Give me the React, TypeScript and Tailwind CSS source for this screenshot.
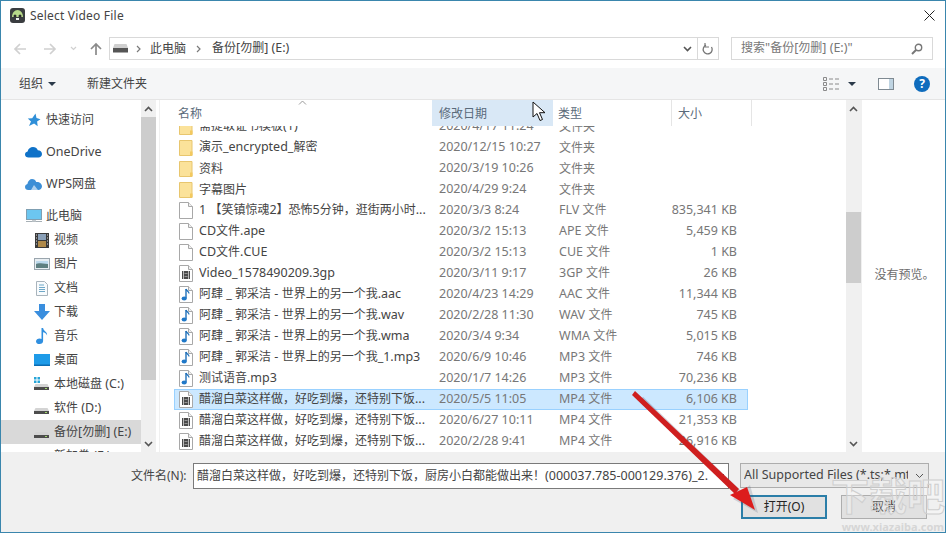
import React from "react";

/* ASCII runs are set a little larger than CJK runs, as in the reference's font pairing */
const T = ({ children }: { children: string }) => (
  <>
    {children.split(/([\x00-\x7f]+)/).map((part, i) =>
      /[\x00-\x7f]/.test(part) ? (
        <span key={i} className="text-[12.5px]">{part}</span>
      ) : (
        <span key={i}>{part}</span>
      )
    )}
  </>
);

const Folder = () => (
  <svg width="14" height="17" viewBox="0 0 14 17" className="shrink-0">
    <path d="M0.5 1.5h12.5v15H0.5z" fill="#fbe29a" stroke="#e8c66e" />
    <path d="M11 12.5h2.5v4H11z" fill="#f3c95f" />
  </svg>
);
const Sheet = ({ children }: { children?: React.ReactNode }) => (
  <svg width="14" height="17" viewBox="0 0 14 17" className="shrink-0">
    <path d="M0.5 0.5h9l4 4v12h-13z" fill="#fff" stroke="#a8a8a8" />
    <path d="M9.5 0.5v4h4" fill="#f0f0f0" stroke="#a8a8a8" />
    {children}
  </svg>
);
const Blank = () => <Sheet />;
const Video = () => (
  <Sheet>
    <path d="M3 6h8v8H3z" fill="#4a4a4a" />
    <path d="M4.5 6v8M9.5 6v8" stroke="#d8d8d8" strokeWidth="0.8" />
    <path d="M5.5 8.5h3M5.5 11.5h3" stroke="#aaa" strokeWidth="0.8" />
  </Sheet>
);
const Audio = () => (
  <Sheet>
    <path d="M7 3v9" stroke="#1f6fb8" strokeWidth="1.4" />
    <ellipse cx="5.2" cy="12.4" rx="2.6" ry="2" fill="#1f78c8" />
    <path d="M7 3c0.5 2 3 2.4 3 4.6" fill="none" stroke="#1f6fb8" strokeWidth="1.2" />
  </Sheet>
);

const files: [string, React.ReactNode, string, string, string][] = [
  ["需提取证书模板(1)", <Folder />, "2020/4/17 11:24", "文件夹", ""],
  ["演示_encrypted_解密", <Folder />, "2020/12/15 10:27", "文件夹", ""],
  ["资料", <Folder />, "2020/3/19 10:26", "文件夹", ""],
  ["字幕图片", <Folder />, "2020/4/29 9:24", "文件夹", ""],
  ["1 【笑镇惊魂2】恐怖5分钟，逛街两小时...", <Blank />, "2020/3/3 8:24", "FLV 文件", "835,341 KB"],
  ["CD文件.ape", <Blank />, "2020/3/2 15:13", "APE 文件", "5,459 KB"],
  ["CD文件.CUE", <Blank />, "2020/3/2 15:13", "CUE 文件", "1 KB"],
  ["Video_1578490209.3gp", <Video />, "2020/3/11 9:17", "3GP 文件", "26 KB"],
  ["阿肆 _ 郭采洁 - 世界上的另一个我.aac", <Audio />, "2020/4/23 14:29", "AAC 文件", "11,344 KB"],
  ["阿肆 _ 郭采洁 - 世界上的另一个我.wav", <Audio />, "2020/2/28 11:30", "WAV 文件", "745 KB"],
  ["阿肆 _ 郭采洁 - 世界上的另一个我.wma", <Audio />, "2020/3/4 9:34", "WMA 文件", "5,015 KB"],
  ["阿肆 _ 郭采洁 - 世界上的另一个我_1.mp3", <Audio />, "2020/6/9 10:46", "MP3 文件", "746 KB"],
  ["测试语音.mp3", <Audio />, "2020/1/7 14:26", "MP3 文件", "70,236 KB"],
  ["醋溜白菜这样做，好吃到爆，还特别下饭...", <Video />, "2020/5/5 11:05", "MP4 文件", "6,106 KB"],
  ["醋溜白菜这样做，好吃到爆，还特别下饭...", <Video />, "2020/6/27 10:11", "MP4 文件", "21,353 KB"],
  ["醋溜白菜这样做，好吃到爆，还特别下饭...", <Video />, "2020/2/28 9:41", "MP4 文件", "26,916 KB"],
];

const Disk = ({ win }: { win?: boolean }) => (
  <svg width="15" height="16" viewBox="0 0 15 16">
    {win && <path d="M0 1h2.5v2.5H0zM3.5 1H6v2.5H3.5zM0 4.5h2.5V7H0zM3.5 4.5H6V7H3.5z" fill="#27a5d8" />}
    <path d="M1.5 8h12l1.5 3H0z" fill="#d4d4d4" />
    <rect x="0" y="11" width="15" height="3" fill="#4d4d4d" />
    <rect x="11" y="12" width="2" height="1" fill="#9fd86a" />
  </svg>
);

const side: { label: string; icon: React.ReactNode; child?: boolean; gap?: boolean; sel?: boolean }[] = [
  {
    label: "快速访问",
    icon: (
      <svg width="14" height="14" viewBox="0 0 14 14">
        <path d="M8.5 0.5 9.5 5l4 1.2-3.4 2.3.6 4.8-3.6-2.8L2 13l2-4.4L0.8 5.6l4.4-.3z" fill="#2f8fd8" />
      </svg>
    ),
  },
  {
    label: "OneDrive",
    gap: true,
    icon: (
      <svg width="17" height="12" viewBox="0 0 17 12">
        <path d="M3.5 11.5C1.5 11.5 0 10.2 0 8.5 0 7 1 5.8 2.6 5.5 3.2 2.6 5.5 1 8 1c2.2 0 4 1.2 4.8 3.2 2.4 0 4.2 1.7 4.2 3.8 0 2-1.6 3.5-3.6 3.5z" fill="#0f72c8" />
      </svg>
    ),
  },
  {
    label: "WPS网盘",
    gap: true,
    icon: (
      <svg width="17" height="13" viewBox="0 0 17 13">
        <path d="M3.2 12C1.4 12 0 10.7 0 9c0-1.5 1-2.6 2.4-3C2.8 3 5 1 7 1c2.1 0 3.6 1.3 4.2 3 3-.5 5.8 1.7 5.8 4.2 0 2.2-1.7 3.8-3.8 3.8z" fill="#3d8fd6" />
        <path d="M6 12l3-5 4 5z" fill="#fff" opacity="0.6" />
      </svg>
    ),
  },
  {
    label: "此电脑",
    gap: true,
    icon: (
      <svg width="16" height="15" viewBox="0 0 16 15">
        <rect x="0.5" y="0.5" width="15" height="10" fill="#6cc6f0" stroke="#7f9fb2" />
        <path d="M0 12h16v1H0z" fill="#a7b0b6" />
        <path d="M6 11h4v1.5H6z" fill="#c6ccd0" />
      </svg>
    ),
  },
  {
    label: "视频",
    child: true,
    icon: (
      <svg width="14" height="15" viewBox="0 0 14 15">
        <rect width="14" height="15" fill="#3a3a3a" />
        <rect x="3" y="1" width="8" height="6" fill="#8aa0b8" />
        <rect x="3" y="8" width="8" height="6" fill="#b08a4a" />
        <path d="M1 2h1M1 5h1M1 8h1M1 11h1M12 2h1M12 5h1M12 8h1M12 11h1" stroke="#ddd" />
      </svg>
    ),
  },
  {
    label: "图片",
    child: true,
    icon: (
      <svg width="16" height="12" viewBox="0 0 16 12">
        <rect x="0.5" y="0.5" width="15" height="11" fill="#e8eef2" stroke="#9aa5ad" />
        <path d="M2 3h12v3H2z" fill="#bcd9ec" />
        <path d="M2 6c3-1.5 6 0 12 0v4H2z" fill="#5e7f80" />
      </svg>
    ),
  },
  {
    label: "文档",
    child: true,
    icon: (
      <svg width="12" height="15" viewBox="0 0 12 15">
        <path d="M0.5 0.5h8l3 3v11h-11z" fill="#f8fbfd" stroke="#a9b4bc" />
        <path d="M3 4h5M3 6.5h6M3 8.5h6M3 10.5h6" stroke="#6fa8c8" />
      </svg>
    ),
  },
  {
    label: "下载",
    child: true,
    icon: (
      <svg width="16" height="16" viewBox="0 0 16 16">
        <path d="M5 0h6v7h5l-8 9-8-9h5z" fill="#3a8ede" />
      </svg>
    ),
  },
  {
    label: "音乐",
    child: true,
    icon: (
      <svg width="12" height="16" viewBox="0 0 12 16">
        <path d="M5.5 0h1.6c.3 3 4.4 3.6 4 7.5-.6-2-2.5-3-4-3.3V13c0 1.7-1.5 3-3.5 3S0 15 0 13.4s1.7-2.9 3.6-2.9c.7 0 1.4.2 1.9.5z" fill="#2f8fe0" />
      </svg>
    ),
  },
  {
    label: "桌面",
    child: true,
    icon: (
      <svg width="16" height="12" viewBox="0 0 16 12">
        <rect width="16" height="12" fill="#1e9be8" />
        <rect y="10.5" width="16" height="1.5" fill="#0b6cb2" />
      </svg>
    ),
  },
  { label: "本地磁盘 (C:)", child: true, icon: <Disk win /> },
  { label: "软件 (D:)", child: true, icon: <Disk /> },
  { label: "备份[勿删] (E:)", child: true, sel: true, icon: <Disk /> },
  { label: "新加卷 (F:)", child: true, icon: <Disk /> },
];

const Chev = ({ up, className }: { up?: boolean; className?: string }) => (
  <svg width="9" height="6" viewBox="0 0 9 6" className={className}>
    <path d={up ? "M1 5l3.5-3.5L8 5" : "M1 1l3.5 3.5L8 1"} fill="none" stroke="#555" strokeWidth="1.6" />
  </svg>
);
const Crumb = () => (
  <svg width="6" height="8" viewBox="0 0 6 8" className="shrink-0">
    <path d="M1 1l3 3-3 3" fill="none" stroke="#7a7a7a" strokeWidth="1.2" />
  </svg>
);
const Arrow = ({ dir, color }: { dir: "l" | "r" | "u"; color: string }) => (
  <svg width="14" height="14" viewBox="0 0 14 14" className="shrink-0">
    <path
      d={dir === "l" ? "M13 7H2M7 2 2 7l5 5" : dir === "r" ? "M1 7h11M7 2l5 5-5 5" : "M7 13V2M2 7l5-5 5 5"}
      fill="none"
      stroke={color}
      strokeWidth="1.7"
    />
  </svg>
);

export default function App() {
  return (
    <div className="relative w-[946px] h-[533px] box-border overflow-hidden border border-[#3a86ad] bg-white flex flex-col text-[12px] text-[#444] font-['Noto_Sans','Noto_Sans_CJK_SC',sans-serif]">
      {/* title */}
      <div className="h-[29px] shrink-0 flex items-center pl-[9px] pr-[9px]">
        <svg width="15" height="15" viewBox="0 0 15 15" className="shrink-0">
          <rect width="15" height="15" rx="3" fill="#3a3d40" />
          <path d="M2 9c0-4 2.5-7 5.5-7S13 5 13 9z" fill="#b7d98a" />
          <circle cx="5" cy="8" r="1.5" fill="#2c2c2c" />
          <circle cx="10" cy="8" r="1.5" fill="#2c2c2c" />
          <path d="M6 10h3v2H6z" fill="#eee" />
        </svg>
        <span className="ml-[5px] tracking-[0.2px] text-[#444]">Select Video File</span>
        <svg width="11" height="11" viewBox="0 0 11 11" className="ml-auto mr-[1px]">
          <path d="M.5.5l10 10M10.5.5l-10 10" stroke="#222" strokeWidth="1" />
        </svg>
      </div>
      {/* nav */}
      <div className="h-[38px] shrink-0 flex items-start pt-[7px] pl-[12px]">
        <div className="h-[23px] flex items-center">
          <Arrow dir="l" color="#d0d0d0" />
          <div className="w-[16px]" />
          <Arrow dir="r" color="#d0d0d0" />
          <svg width="7" height="5" viewBox="0 0 7 5" className="ml-[13px]">
            <path d="M1 1l2.5 2.5L6 1" fill="none" stroke="#d0d0d0" strokeWidth="1.2" />
          </svg>
          <div className="w-[12px]" />
          <Arrow dir="u" color="#8a8a8a" />
        </div>
        <div className="ml-[6px] w-[610px] h-[23px] box-border border border-[#d9d9d9] flex items-center">
          <span className="ml-[3px] flex">
            <svg width="15" height="9" viewBox="0 0 15 9">
              <path d="M1.5 0h12L15 4H0z" fill="#cfcfcf" />
              <rect y="4" width="15" height="4.5" fill="#555" />
            </svg>
          </span>
          <span className="ml-[8px] flex"><Crumb /></span>
          <span className="ml-[8px]">此电脑</span>
          <span className="ml-[10px] flex"><Crumb /></span>
          <span className="ml-[10px]"><T>备份[勿删] (E:)</T></span>
          <Chev className="ml-auto mr-[5px]" />
          <div className="w-px h-full bg-[#d9d9d9]" />
          <svg width="12" height="12" viewBox="0 0 12 12" className="ml-[4px] mr-[4px]">
            <path d="M4 2.2A4.5 4.5 0 1 0 9.5 4" fill="none" stroke="#777" strokeWidth="1.3" />
            <path d="M3 0v4h4" fill="none" stroke="#777" strokeWidth="1.2" />
          </svg>
        </div>
        <div className="ml-[12px] w-[202px] h-[23px] box-border border border-[#d9d9d9] flex items-center pl-[9px] pr-[9px] text-[#777]">
          <span><T>搜索"备份[勿删] (E:)"</T></span>
          <svg width="12" height="12" viewBox="0 0 12 12" className="ml-auto">
            <circle cx="7.5" cy="4.5" r="3.2" fill="none" stroke="#777" strokeWidth="1.4" />
            <path d="M5 7 1 11" stroke="#777" strokeWidth="2" />
          </svg>
        </div>
      </div>
      {/* toolbar */}
      <div className="h-[32px] shrink-0 box-border bg-[#f5f6f7] border-b border-[#e5e5e5] flex items-center pl-[18px] pr-[15px] text-[#444]">
        <span>组织</span>
        <svg width="8" height="4" viewBox="0 0 8 4" className="ml-[5px]"><path d="M0 0h8L4 4z" fill="#2b3a4a" /></svg>
        <span className="ml-[31px]">新建文件夹</span>
        <svg width="17" height="14" viewBox="0 0 17 14" className="ml-auto">
          <path d="M.5.5h3v3h-3zM.5 5.5h3v3h-3zM.5 10.5h3v3h-3z" fill="none" stroke="#8a8a8a" />
          <path d="M6 2h4M12 2h4M6 7h4M12 7h4M6 12h4M12 12h4" stroke="#8a8a8a" />
        </svg>
        <svg width="8" height="4" viewBox="0 0 8 4" className="ml-[8px]"><path d="M0 0h8L4 4z" fill="#2b3a4a" /></svg>
        <svg width="16" height="12" viewBox="0 0 16 12" className="ml-[22px]">
          <rect x=".5" y=".5" width="15" height="11" fill="#fff" stroke="#7f8a92" />
          <rect x="11" y="1" width="4" height="10" fill="#bfd4e2" />
        </svg>
        <span className="ml-[20px] w-[16px] h-[16px] rounded-full bg-[#0f6cbd] flex items-center justify-center text-white font-bold text-[12px] leading-none">?</span>
      </div>
      {/* main */}
      <div className="flex-1 min-h-0 flex">
        {/* sidebar */}
        <div className="w-[140px] shrink-0 overflow-hidden pt-[8px]">
          {side.map((s) => (
            <div
              key={s.label}
              className={`h-[24px] flex items-center ${s.gap ? "mt-[8px]" : ""} ${s.sel ? "bg-[#d9d9d9]" : ""} ${s.child ? "pl-[32px]" : "pl-[24px]"}`}
            >
              <span className="w-[17px] shrink-0 flex justify-center">{s.icon}</span>
              <span className="ml-[4px] whitespace-nowrap"><T>{s.label}</T></span>
            </div>
          ))}
        </div>
        {/* sidebar scrollbar */}
        <div className="w-[15px] shrink-0 bg-[#f0f0f0] flex flex-col items-center">
          <div className="h-[17px] flex items-center justify-center"><Chev up /></div>
          <div className="w-full h-[263px] bg-[#cdcdcd]" />
          <div className="mt-auto h-[17px] flex items-center justify-center"><Chev /></div>
        </div>
        {/* list */}
        <div className="ml-[3px] w-[687px] shrink-0 border-l border-[#f0f0f0] flex flex-col min-h-0 relative">
          <div className="h-[26px] shrink-0 flex text-[#5a6a7a] relative">
            <div className="w-[272px] pl-[18px] pt-[5px]">名称</div>
            <div className="w-[121px] bg-[#d9e8f6] pl-[7px] pt-[5px]">修改日期</div>
            <div className="w-[119px] border-r border-[#e5e5e5] pl-[5px] pt-[5px]">类型</div>
            <div className="w-[80px] border-r border-[#e5e5e5] pl-[6px] pt-[5px]">大小</div>
            <svg width="9" height="5" viewBox="0 0 9 5" className="absolute left-[138px] top-0">
              <path d="M1 4.5 4.5 1 8 4.5" fill="none" stroke="#9a9a9a" />
            </svg>
          </div>
          <div className="flex-1 min-h-0 overflow-hidden">
            <div className="-mt-[10px] pl-[14px]">
              {files.map((f, i) => {
                const sel = i === 13;
                return (
                  <div
                    key={i}
                    className={`h-[21px] w-[574px] box-border flex items-center border ${sel ? "bg-[#cce8ff] border-[#99d1ff]" : "border-transparent"}`}
                  >
                    <span className="ml-[4px] w-[14px] flex shrink-0">{f[1]}</span>
                    <span className="ml-[6px] w-[240px] shrink-0 whitespace-nowrap overflow-hidden"><T>{f[0]}</T></span>
                    <span className="w-[120px] shrink-0 text-[#777]"><T>{f[2]}</T></span>
                    <span className="w-[72px] shrink-0 text-[#777]"><T>{f[3]}</T></span>
                    <span className="w-[106px] shrink-0 text-right text-[#777]"><T>{f[4]}</T></span>
                  </div>
                );
              })}
            </div>
          </div>
        </div>
        {/* list scrollbar */}
        <div className="w-[15px] shrink-0 bg-[#f0f0f0] flex flex-col items-center">
          <div className="h-[17px] flex items-center justify-center"><Chev up /></div>
          <div className="w-full h-[95px]" />
          <div className="w-full h-[71px] bg-[#cdcdcd]" />
          <div className="mt-auto h-[17px] flex items-center justify-center"><Chev /></div>
        </div>
        <div className="flex-1 border-l border-[#f0f0f0] flex items-center justify-center text-[#6d6d6d]">
          <span className="mb-[2px] ml-[2px] whitespace-nowrap">没有预览。</span>
        </div>
      </div>
      {/* bottom */}
      <div className="h-[80px] shrink-0 bg-[#f0f0f0] flex flex-col pl-[130px] pt-[11px]">
        <div className="flex items-start">
          <span className="h-[26px] leading-[26px] w-[62px] shrink-0 whitespace-nowrap">文件名(N):</span>
          <div className="w-[536px] h-[26px] box-border border border-[#7a7a7a] bg-white flex items-center pl-[3px] overflow-hidden">
            <span className="whitespace-nowrap overflow-hidden w-[511px] shrink-0"><T>醋溜白菜这样做，好吃到爆，还特别下饭，厨房小白都能做出来！(000037.785-000129.376)_2.mp4</T></span>
            <svg width="9" height="6" viewBox="0 0 9 6" className="ml-[8px] shrink-0"><path d="M1 1l3.5 3.5L8 1" fill="none" stroke="#555" /></svg>
          </div>
          <div className="ml-[11px] w-[189px] h-[25px] box-border border border-[#adadad] bg-[#e8e8e8] flex items-center pl-[3px] pr-[4px]">
            <span className="whitespace-nowrap overflow-hidden w-[164px]"><T>All Supported Files (*.ts;*.mts;*.m2ts)</T></span>
            <svg width="9" height="6" viewBox="0 0 9 6" className="ml-auto shrink-0"><path d="M1 1l3.5 3.5L8 1" fill="none" stroke="#555" /></svg>
          </div>
        </div>
        <div className="flex pl-[610px] mt-[6px]">
          <button className="w-[86px] h-[24px] box-border border-2 border-[#2b7ea8] bg-[#e1e1e1] text-[#222]">打开(O)</button>
          <button className="ml-[14px] w-[86px] h-[24px] box-border border border-[#adadad] bg-[#e1e1e1] text-[#222]">取消</button>
        </div>
      </div>

      {/* watermark */}
      <span className="absolute right-[1px] bottom-[-1px] text-[11px] leading-[13px] font-bold text-[#d6d6d6] whitespace-nowrap">www.xiazaiba.com</span>
      <span className="absolute left-[830px] top-[475px] text-[38px] leading-none font-bold text-white/30 [-webkit-text-stroke:1px_#cfcfcf] whitespace-nowrap">下载吧</span>

      {/* mouse cursor */}
      <svg width="14" height="21" viewBox="0 0 14 21" className="absolute left-[531px] top-[100px]">
        <path d="M1 1v15l4-3.5 3 7 2.5-1-3-6.8H13z" fill="#fff" stroke="#111" strokeWidth="1" />
      </svg>
      {/* red arrow */}
      <svg width="946" height="533" viewBox="0 0 946 533" className="absolute left-[-1px] top-[-1px] pointer-events-none">
        <path d="M637 396 740 495" stroke="#46506a" strokeOpacity="0.25" strokeWidth="6" fill="none" transform="translate(4 3)" />
        <path d="M755 510 730 496 747 482z" fill="#46506a" fillOpacity="0.2" transform="translate(3 3)" />
        <path d="M635 391 739 489 735 494 632 395z" fill="#cf1f1f" />
        <path d="M755 510 730 495 747 487z" fill="#dc1c1c" />
      </svg>
    </div>
  );
}
